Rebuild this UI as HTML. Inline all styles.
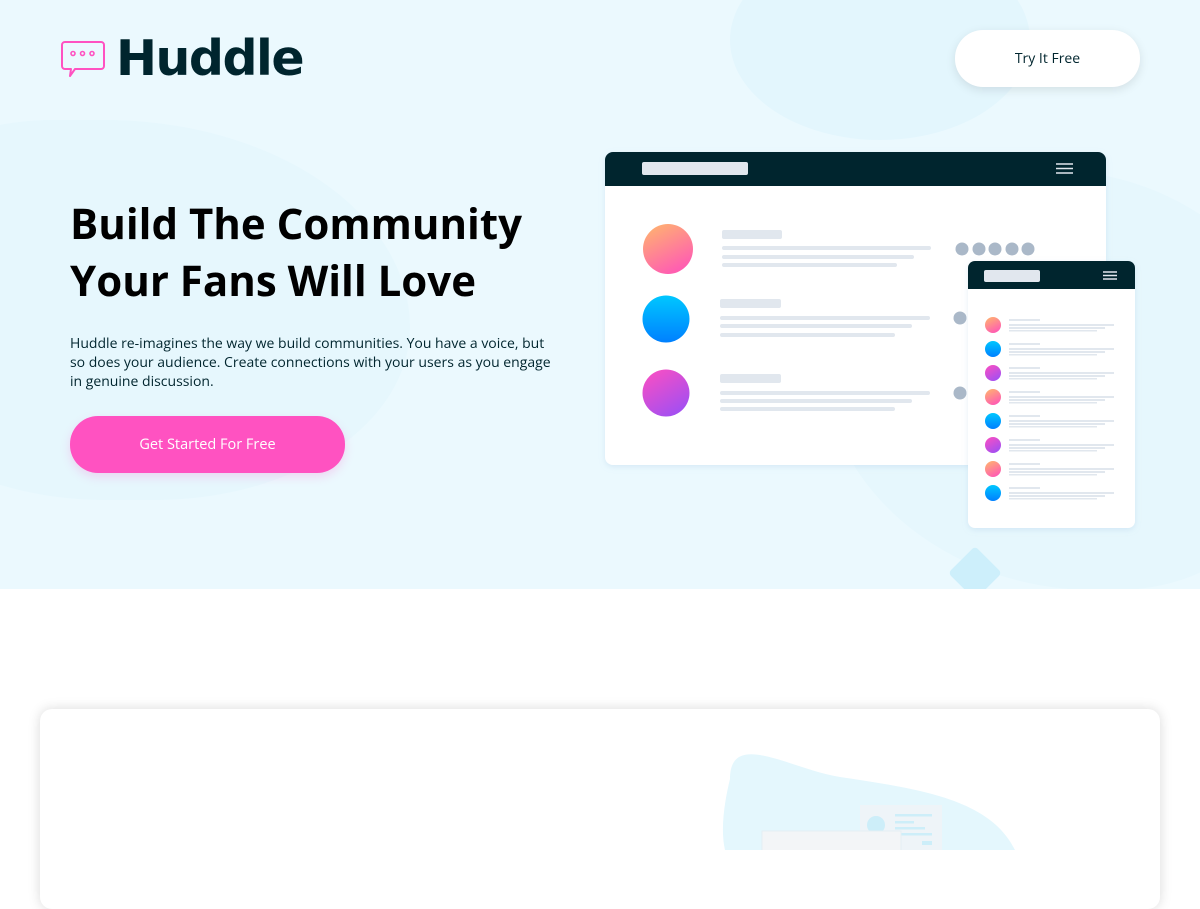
<!DOCTYPE html>
<html><head><meta charset="utf-8"><style>
*{margin:0;padding:0;box-sizing:border-box}
body{width:1200px;height:850px;overflow:hidden;background:#fff;font-family:"Open Sans","Liberation Sans",sans-serif;position:relative}
.hero{position:absolute;left:0;top:0;width:1200px;height:589px;background:#ebf9fe;overflow:hidden}
.blob{position:absolute;background:#e0f5fd;border-radius:50%}
.logo{position:absolute;left:60px;top:30px;display:flex;align-items:center}
.logo span{font-family:"DejaVu Sans","Liberation Sans",sans-serif;font-weight:700;font-size:49px;color:#00252e;margin-left:10px;letter-spacing:-1.5px}
.try{position:absolute;left:955px;top:30px;width:185px;height:57px;background:#fff;border-radius:28px;box-shadow:0 3px 10px rgba(0,0,0,.1);font-size:14px;color:#00252e;text-align:center;line-height:57px}
h1{position:absolute;left:70px;top:195px;font-size:42px;line-height:57px;font-weight:700;color:#000;font-family:"Open Sans","Liberation Sans",sans-serif;width:530px}
p{position:absolute;left:70px;top:334px;width:490px;font-size:14px;line-height:19px;color:#00252e}
.cta{position:absolute;left:70px;top:416px;width:275px;height:57px;border-radius:28px;background:#ff52c1;color:#fff;font-size:14.5px;text-align:center;line-height:57px;box-shadow:0 4px 10px rgba(255,82,193,.2)}
.card{position:absolute;left:40px;top:709px;width:1120px;height:200px;background:#fff;border-radius:12px;box-shadow:0 0 12px rgba(0,0,0,.15);overflow:hidden}
</style></head><body>
<div class="hero">
<div class="blob" style="left:-150px;top:120px;width:560px;height:380px;border-radius:40% 60% 50% 50%;background:#e6f7fd"></div>
<div class="blob" style="left:730px;top:-60px;width:300px;height:200px;background:#e3f6fd"></div>
<div class="blob" style="left:820px;top:170px;width:480px;height:420px;border-radius:45% 55% 40% 60%;background:#e6f7fd"></div>
<div style="position:absolute;left:956px;top:554px;width:38px;height:38px;background:#cdeffb;transform:rotate(45deg);border-radius:4px"></div>
<svg style="position:absolute;left:0;top:0" width="1200" height="589">
<defs>
<linearGradient id="g1" x1="0" y1="0" x2="0.5" y2="1"><stop offset="0" stop-color="#ffb86b"/><stop offset="1" stop-color="#ff5fb0"/></linearGradient>
<linearGradient id="g2" x1="0" y1="0" x2="0" y2="1"><stop offset="0" stop-color="#00c7ff"/><stop offset="1" stop-color="#0080ff"/></linearGradient>
<linearGradient id="g3" x1="0" y1="0" x2="0.6" y2="1"><stop offset="0" stop-color="#ff4fc0"/><stop offset="1" stop-color="#a54ff0"/></linearGradient>
<filter id="sh"><feDropShadow dx="0" dy="2" stdDeviation="3" flood-color="#9bd" flood-opacity=".25"/></filter>
</defs>
<g filter="url(#sh)"><rect x="605" y="152" width="501" height="313" rx="8" fill="#fff"/></g>
<path d="M605 186V160a8 8 0 0 1 8-8h485a8 8 0 0 1 8 8v26z" fill="#00252e"/>
<rect x="642" y="162" width="106" height="13" rx="2" fill="#e1e7ee"/>
<g stroke="#e1e7ee" stroke-width="1.6"><path d="M1056 164h17M1056 168.5h17M1056 173h17"/></g>
<circle cx="668" cy="249" r="25" fill="url(#g1)"/>
<circle cx="666" cy="319" r="23.5" fill="url(#g2)"/>
<circle cx="666" cy="393" r="23.5" fill="url(#g3)"/>
<g fill="#e1e7ee">
<rect x="722" y="230" width="60" height="9" rx="2"/><rect x="722" y="246" width="209" height="4" rx="2"/><rect x="722" y="255" width="192" height="4" rx="2"/><rect x="722" y="263" width="175" height="4" rx="2"/>
<rect x="720" y="299" width="61" height="9" rx="2"/><rect x="720" y="316" width="210" height="4" rx="2"/><rect x="720" y="324" width="192" height="4" rx="2"/><rect x="720" y="333" width="175" height="4" rx="2"/>
<rect x="720" y="374" width="61" height="9" rx="2"/><rect x="720" y="391" width="210" height="4" rx="2"/><rect x="720" y="399" width="192" height="4" rx="2"/><rect x="720" y="407" width="175" height="4" rx="2"/>
</g>
<g fill="#aab8c8"><circle cx="962" cy="249" r="6.5"/><circle cx="979" cy="249" r="6.5"/><circle cx="995" cy="249" r="6.5"/><circle cx="1012" cy="249" r="6.5"/><circle cx="1028" cy="249" r="6.5"/><circle cx="960" cy="318" r="6.5"/><circle cx="960" cy="393" r="6.5"/></g>
<g filter="url(#sh)"><rect x="968" y="261" width="167" height="267" rx="7" fill="#fff"/></g>
<path d="M968 289V268a7 7 0 0 1 7-7h153a7 7 0 0 1 7 7v21z" fill="#00252e"/>
<rect x="984" y="270" width="56" height="12" rx="2" fill="#e1e7ee"/>
<g stroke="#e1e7ee" stroke-width="1.4"><path d="M1103 272h14M1103 275.5h14M1103 279h14"/></g>
<g fill="#e1e7ee">
<rect x="1009" y="319" width="31" height="2"/><rect x="1009" y="324" width="105" height="2"/><rect x="1009" y="327" width="96" height="2"/><rect x="1009" y="330" width="88" height="1.5"/>
<rect x="1009" y="343" width="31" height="2"/><rect x="1009" y="348" width="105" height="2"/><rect x="1009" y="351" width="96" height="2"/><rect x="1009" y="354" width="88" height="1.5"/>
<rect x="1009" y="367" width="31" height="2"/><rect x="1009" y="372" width="105" height="2"/><rect x="1009" y="375" width="96" height="2"/><rect x="1009" y="378" width="88" height="1.5"/>
<rect x="1009" y="391" width="31" height="2"/><rect x="1009" y="396" width="105" height="2"/><rect x="1009" y="399" width="96" height="2"/><rect x="1009" y="402" width="88" height="1.5"/>
<rect x="1009" y="415" width="31" height="2"/><rect x="1009" y="420" width="105" height="2"/><rect x="1009" y="423" width="96" height="2"/><rect x="1009" y="426" width="88" height="1.5"/>
<rect x="1009" y="439" width="31" height="2"/><rect x="1009" y="444" width="105" height="2"/><rect x="1009" y="447" width="96" height="2"/><rect x="1009" y="450" width="88" height="1.5"/>
<rect x="1009" y="463" width="31" height="2"/><rect x="1009" y="468" width="105" height="2"/><rect x="1009" y="471" width="96" height="2"/><rect x="1009" y="474" width="88" height="1.5"/>
<rect x="1009" y="487" width="31" height="2"/><rect x="1009" y="492" width="105" height="2"/><rect x="1009" y="495" width="96" height="2"/><rect x="1009" y="498" width="88" height="1.5"/>
</g>
<circle cx="993" cy="325" r="8" fill="url(#g1)"/><circle cx="993" cy="349" r="8" fill="url(#g2)"/><circle cx="993" cy="373" r="8" fill="url(#g3)"/><circle cx="993" cy="397" r="8" fill="url(#g1)"/>
<circle cx="993" cy="421" r="8" fill="url(#g2)"/><circle cx="993" cy="445" r="8" fill="url(#g3)"/><circle cx="993" cy="469" r="8" fill="url(#g1)"/><circle cx="993" cy="493" r="8" fill="url(#g2)"/>
</svg>
<div class="logo">
<svg width="46" height="38" viewBox="0 0 46 38"><path d="M5 2h36a3 3 0 0 1 3 3v21a3 3 0 0 1-3 3H15l-5 7 1-7H5a3 3 0 0 1-3-3V5a3 3 0 0 1 3-3z" fill="none" stroke="#ff52c1" stroke-width="2" stroke-linejoin="round"/><g fill="none" stroke="#ff52c1" stroke-width="1.6"><circle cx="13" cy="13.5" r="2"/><circle cx="22.5" cy="13.5" r="2"/><circle cx="32" cy="13.5" r="2"/></g></svg>
<span>Huddle</span>
</div>
<div class="try">Try It Free</div>
<h1>Build The Community Your Fans Will Love</h1>
<p>Huddle re-imagines the way we build communities. You have a voice, but so does your audience. Create connections with your users as you engage in genuine discussion.</p>
<div class="cta">Get Started For Free</div>
</div>
<div class="card">
<svg style="position:absolute;left:0;top:0" width="1120" height="141">
<path d="M690 70C690 20 750 60 800 68C880 80 950 90 975 141H685C680 120 685 90 690 70Z" fill="#e4f7fd"/>
<rect x="820" y="96" width="82" height="45" fill="#eef4f8"/>
<circle cx="836" cy="116" r="9" fill="#cdeef9"/>
<g fill="#cdeef9"><rect x="855" y="105" width="37" height="2.5"/><rect x="855" y="112" width="19" height="2.5"/><rect x="855" y="118" width="30" height="2.5"/><rect x="855" y="124" width="37" height="2.5"/><rect x="882" y="132" width="10" height="4"/></g>
<rect x="722" y="122" width="139" height="30" fill="#f3f5f7" stroke="#e4eef3"/>
</svg>
</div>
</body></html>
